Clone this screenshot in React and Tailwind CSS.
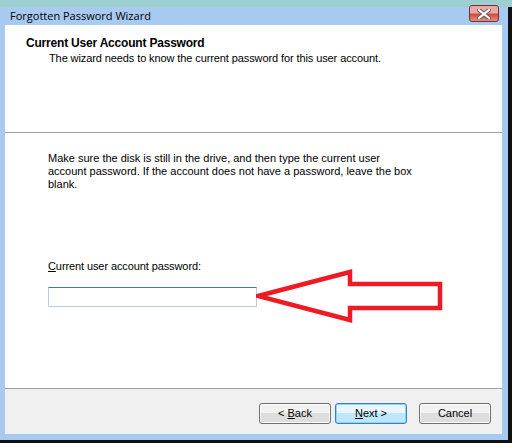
import React from "react";

const uiFont = { fontFamily: '"Liberation Sans", Arial, sans-serif' };

const Button = ({ children, primary }) => (
  <button
    className={
      primary
        ? "h-[21px] w-[72px] rounded-[3px] border border-[#3c7fb1] bg-gradient-to-b from-[#eaf6fd] from-50% to-[#bee6fd] to-50% text-[11px] text-black shadow-[inset_0_0_0_1px_#8fd3f7]"
        : "h-[21px] w-[72px] rounded-[3px] border border-[#707070] bg-gradient-to-b from-[#f2f2f2] from-50% to-[#dddddd] to-50% text-[11px] text-black shadow-[inset_0_0_0_1px_#fcfcfc]"
    }
  >
    {children}
  </button>
);

export default function App() {
  return (
    <div className="w-[512px] h-[443px] flex flex-col bg-[#9ccfd0] overflow-hidden" style={uiFont}>
      <div className="h-[7px] shrink-0" />
      <div className="relative flex-1 flex flex-col bg-[#a8caf0] border-r-[4px] border-b-[3px] border-[#101010]">
        {/* title bar */}
        <div className="h-[18px] shrink-0 flex items-center pl-[10px]">
          <span
            className="text-[11px] leading-[14px] text-black"
            style={{ fontFamily: '"Open Sans", "Noto Sans", sans-serif' }}
          >
            Forgotten Password Wizard
          </span>
        </div>
        {/* close button */}
        <div className="absolute left-[469px] -top-[2px] w-[30px] h-[17px] rounded-[3px] border border-[#6e3333] bg-gradient-to-b from-[#eba7a3] from-45% via-[#d0493c] via-55% to-[#e58d83] flex items-center justify-center">
          <svg width="14" height="10" viewBox="0 0 14 10">
            <path d="M2 1 L12 9 M12 1 L2 9" stroke="#5a5a5a" strokeWidth="4" strokeLinecap="square" />
            <path d="M2 1 L12 9 M12 1 L2 9" stroke="#ffffff" strokeWidth="2.2" strokeLinecap="square" />
          </svg>
        </div>

        <div className="flex-1 flex flex-col pl-[5px] pr-[6px] pb-[6px]">
          {/* header */}
          <div className="h-[108px] shrink-0 bg-white border-b border-[#a0a0a0] pt-[11px] pl-[21px]">
            <div className="text-[12px] leading-[14px] font-bold text-black tracking-[-0.2px]">
              Current User Account Password
            </div>
            <div className="ml-[23px] mt-[1px] text-[11px] leading-[14px] text-black tracking-[-0.1px]">
              The wizard needs to know the current password for this user account.
            </div>
          </div>

          {/* body */}
          <div className="relative h-[256px] shrink-0 bg-white border-b border-[#a0a0a0] pt-[19px] pl-[43px]">
            <p className="text-[11px] leading-[13px] text-black whitespace-nowrap">
              Make sure the disk is still in the drive, and then type the current user
              <br />
              account password. If the account does not have a password, leave the box
              <br />
              blank.
            </p>
            <div className="mt-[69px] text-[11px] leading-[13px] text-black tracking-[-0.1px]">
              <span className="underline">C</span>urrent user account password:
            </div>
            <input
              type="password"
              className="mt-[14px] block w-[209px] h-[20px] bg-white border border-[#b5cfe7] border-t-[#3d7bad] outline-none"
            />
            <svg
              className="absolute left-[251px] top-[136px]"
              width="194"
              height="56"
              viewBox="0 0 194 56"
            >
              <polygon
                points="2,27 94,3 94,15 184,15 184,39 94,39 94,51"
                fill="none"
                stroke="#ed1c24"
                strokeWidth="4.5"
                strokeLinejoin="miter"
              />
            </svg>
          </div>

          {/* footer */}
          <div className="flex-1 bg-[#f0f0f0] flex justify-end items-start pt-[14px] pr-[11px]">
            <Button>
              &lt; <span className="underline">B</span>ack
            </Button>
            <div className="w-[4px]" />
            <Button primary>
              <span className="underline">N</span>ext &gt;
            </Button>
            <div className="w-[12px]" />
            <Button>Cancel</Button>
          </div>
        </div>
      </div>
    </div>
  );
}
